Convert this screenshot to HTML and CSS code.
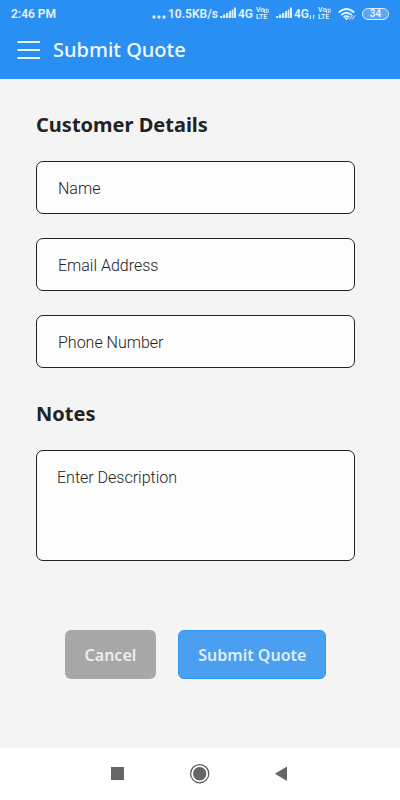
FILE: index.html
```html
<!DOCTYPE html>
<html lang="en">
<head>
<meta charset="utf-8">
<meta name="viewport" content="width=device-width, initial-scale=1">
<title>Submit Quote</title>
<link rel="stylesheet" href="styles.css">
</head>
<body>
<div class="status">
  <span>2:46 PM</span>
  <div class="indicators">
    <svg class="dots" width="14" height="14" viewBox="0 0 14 14"><circle cx="2" cy="10" r="1.7"/><circle cx="7" cy="10" r="1.7"/><circle cx="12" cy="10" r="1.7"/></svg>
    <span class="speed">10.5KB/s</span>
    <svg class="signal" width="16" height="14" viewBox="0 0 16 14"><path d="M0 12V10H2.300V12ZM3 12V8.500H5.300V12ZM6 12V7H8.300V12ZM9 12V5H11.200V12ZM11.800 12V3.500H13.500V12ZM14 12V1.500H16V12Z"/></svg>
    <span>4G</span>
    <span class="volte"><span>Vo<svg width="5" height="7" viewBox="0 0 5 7"><path d="M0 2H1.200V6H0Z"/><path class="wave" d="M2 1.500Q3.500 3.700 2 6M3.700 1.500Q5.200 3.700 3.700 6"/></svg></span><span>LTE</span></span>
    <svg class="signal second" width="16" height="14" viewBox="0 0 16 14"><path d="M0 12V10H2.300V12ZM3 12V8.500H5.300V12ZM6 12V7H8.300V12ZM9 12V5H11.200V12ZM11.800 12V3.500H13.500V12ZM14 12V1.500H16V12Z"/></svg>
    <span class="data">4G<svg width="6" height="6" viewBox="0 0 6 6"><path d="M1 1H2V5H1ZM4 1H5V5H4ZM0 4H1.500V5.500ZM4.500 .5L6 2H4.500Z"/></svg></span>
    <span class="volte"><span>Vo<svg width="5" height="7" viewBox="0 0 5 7"><path d="M0 2H1.200V6H0Z"/><path class="wave" d="M2 1.500Q3.500 3.700 2 6M3.700 1.500Q5.200 3.700 3.700 6"/></svg></span><span>LTE</span></span>
    <svg class="wifi" width="18" height="14" viewBox="0 0 18 14"><path class="arc" d="M.8 5.500Q8.500 -1.500 16.200 5.500M3.200 8Q8.500 3.400 13.800 8M5.600 10.200Q8.500 8 11.400 10.200"/><path d="M6.500 11.200Q8.500 9.800 10.500 11.200L8.500 13.300Z"/><path class="activity" d="M11.500 12.500L14.500 8.500M14 12.500L17 8.500"/></svg>
    <span class="battery">34</span>
  </div>
</div>
<header class="appbar">
  <button class="menu" type="button" aria-label="Menu"><svg width="24" height="20" viewBox="0 0 24 20"><path d="M.5 2H23M.5 10H23M.5 18H23"/></svg></button>
  <h1>Submit Quote</h1>
</header>
<main>
  <form>
    <h2>Customer Details</h2>
    <div class="fields">
      <input type="text" aria-label="Name" placeholder="Name">
      <input type="email" aria-label="Email Address" placeholder="Email Address">
      <input type="tel" aria-label="Phone Number" placeholder="Phone Number">
    </div>
    <h2><label for="notes">Notes</label></h2>
    <textarea id="notes" placeholder="Enter Description"></textarea>
    <div class="actions">
      <button class="cancel" type="button">Cancel</button>
      <button class="submit" type="submit">Submit Quote</button>
    </div>
  </form>
</main>
<nav class="system" aria-label="System">
  <button type="button" aria-label="Recent apps"><svg width="20" height="20" viewBox="0 0 20 20"><rect x="3" y="3" width="13" height="13"/></svg></button>
  <button type="button" aria-label="Home"><svg width="20" height="20" viewBox="0 0 20 20"><circle class="ring" cx="9.700" cy="9.700" r="9.100"/><circle cx="9.700" cy="9.700" r="6.700"/></svg></button>
  <button type="button" aria-label="Back"><svg width="20" height="20" viewBox="0 0 20 20"><path d="M15 2.500V17L2.900 9.700Z"/></svg></button>
</nav>
</body>
</html>
```
FILE: styles.css
```css
* {
  box-sizing: border-box;
}

body {
  margin: 0;
  min-height: 100vh;
  display: flex;
  flex-direction: column;
  background: #f4f4f4;
  font-family: "Noto Sans", sans-serif;
}

button {
  border: 0;
  padding: 0;
  background: none;
  font-family: inherit;
}

svg {
  display: block;
  flex: none;
}

.status {
  display: flex;
  justify-content: space-between;
  align-items: center;
  height: 28px;
  padding: 0 11px;
  background: #298ff3;
  color: #e6f2fe;
  font: 600 12px/28px Roboto, sans-serif;
}

.status svg {
  fill: #dcecfd;
}

.indicators {
  display: flex;
  align-items: center;
  gap: 2px;
}

.indicators .signal {
  margin-bottom: 2px;
}

.indicators .second {
  margin-left: 4px;
}

.data {
  display: flex;
  align-items: center;
}

.data svg {
  margin-top: 6px;
}

.volte {
  display: flex;
  flex-direction: column;
  width: 13px;
  margin: 0 1px;
  font: 600 7px/7px Roboto, sans-serif;
}

.volte > span {
  display: flex;
}

.volte .wave {
  fill: none;
  stroke: #dcecfd;
}

.wifi {
  margin: 0 4px;
}

.wifi .arc,
.wifi .activity {
  fill: none;
  stroke: #e6f2fe;
  stroke-width: 1.8;
}

.wifi .activity {
  stroke-width: 1;
}

.battery {
  width: 27px;
  height: 12px;
  border: 1px solid #dcecfd;
  border-radius: 6px;
  background: #57a7f6;
  font-size: 10px;
  line-height: 10px;
  text-align: center;
}

.appbar {
  display: flex;
  align-items: center;
  gap: 12px;
  height: 51px;
  padding: 0 17px 8px;
  background: #298ff3;
  color: #f4f9ff;
}

.menu path {
  stroke: #e4f1fe;
  stroke-width: 2;
}

h1 {
  margin: 0;
  padding-top: 1px;
  font-size: 20px;
  font-weight: 500;
  line-height: 28px;
}

main {
  flex: 1;
  padding: 32px 45px 32px 36px;
}

h2 {
  margin: 0 0 22px;
  color: #222;
  font-size: 20px;
  font-weight: 700;
  line-height: 28px;
}

.fields {
  display: grid;
  gap: 24px;
  margin-bottom: 32px;
}

input,
textarea {
  display: block;
  width: 100%;
  margin: 0;
  border: 1px solid #222;
  border-radius: 7px;
  background: #fdfdfd;
  color: #444;
  font: 300 16px/24px Roboto, sans-serif;
}

input {
  height: 53px;
  padding: 2px 21px 0;
}

textarea {
  height: 111px;
  padding: 15px 20px;
  resize: none;
}

::placeholder {
  color: #222;
  opacity: 1;
}

.actions {
  display: flex;
  justify-content: center;
  gap: 22px;
  margin-top: 69px;
}

.actions button {
  height: 49px;
  padding: 0 20px;
  border-radius: 6px;
  font-size: 16px;
  font-weight: 600;
}

.actions .cancel {
  background: #a8a8a8;
  color: #eee;
}

.actions .submit {
  border: 1px solid #2e98f3;
  padding: 0 19px;
  background: #4b9ff1;
  color: #dfedfd;
}

.system {
  display: flex;
  justify-content: center;
  align-items: center;
  gap: 62px;
  height: 52px;
  background: #fff;
}

.system svg {
  fill: #666;
}

.system .ring {
  fill: none;
  stroke: #555;
  stroke-width: 1.2;
}
```
